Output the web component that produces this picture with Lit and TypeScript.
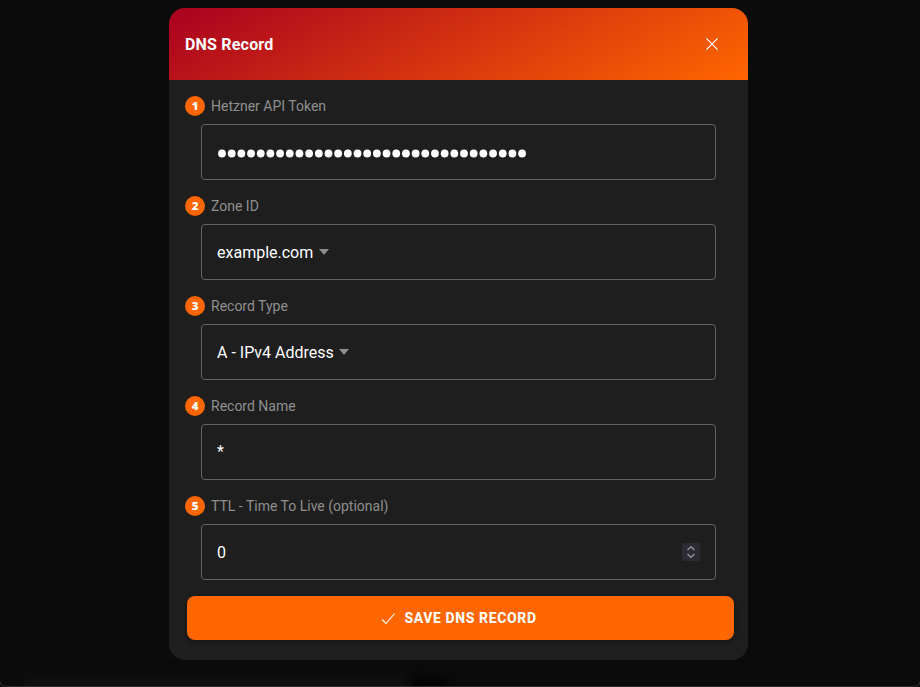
import { LitElement, html, svg, css } from "lit";
import { customElement, property } from "lit/decorators.js";

@customElement("form-field")
class FormField extends LitElement {
  @property({ type: Number }) step = 1;
  @property() label = "";

  static styles = css`
    :host { display: block; }
    .label { display: flex; align-items: center; gap: 6px; height: 20px; margin-left: -16px; font-size: 14px; line-height: 20px; color: #8f8f8f; }
    .badge { width: 20px; height: 20px; border-radius: 50%; background: #ff6600; color: #fff; font: 800 9.6px/20px "Open Sans", sans-serif; text-align: center; }
    .digit { display: block; transform: translateY(0.6px) scaleX(1.2); }
    .box { box-sizing: border-box; height: 56px; margin-top: 8px; padding: 0 15px; border: 1px solid #626262; border-radius: 4px; display: flex; align-items: center; color: #fff; font-size: 16px; line-height: 24px; }
  `;

  render() {
    return html`
      <div class="label"><span class="badge"><span class="digit">${this.step}</span></span><span>${this.label}</span></div>
      <div class="box"><slot></slot></div>
    `;
  }
}

@customElement("app-root")
class AppRoot extends LitElement {
  static styles = css`
    :host { display: block; box-sizing: border-box; height: 687px; overflow: hidden; position: relative; background: #0b0b0b; font-family: Roboto, sans-serif; padding: 8px 172px 0 169px; }
    .backdrop { position: absolute; left: 0; right: 0; bottom: 0; height: 40px; overflow: hidden; }
    .backdrop::before { content: ""; position: absolute; left: 24px; width: 386px; top: 31px; height: 30px; background: #121212; filter: blur(7px); }
    .backdrop::after { content: ""; position: absolute; left: 412px; width: 34px; top: 33px; height: 20px; background: #000; filter: blur(4px); }
    .edge { position: absolute; left: -1px; right: -1px; bottom: 0; height: 12px; border: 1px solid #2c2c2c; border-top: 0; border-radius: 0 0 7px 7px; }
    .card { position: relative; height: 652px; border-radius: 16px; overflow: hidden; background: #1e1e1e; }
    .head { box-sizing: border-box; height: 72px; padding: 0 28px 0 16px; display: flex; align-items: center; justify-content: space-between; background: linear-gradient(150deg, #a90020 0%, #ff6600 100%); color: #fff; }
    .title { padding-top: 2px; font-size: 16px; line-height: 24px; font-weight: 700; letter-spacing: 0.2px; }
    .icon { display: block; fill: none; stroke: #fff; }
    .body { display: flex; flex-direction: column; gap: 16px; padding: 16px 32px 0; }
    .value { padding-top: 2px; }
    .dots { display: block; margin-left: 1px; fill: #fff; }
    .caret { margin-left: 5.5px; border: 5px solid transparent; border-top: 6px solid #8c8c8c; border-bottom: 0; }
    .stepper { margin-left: auto; width: 18px; height: 18px; background: #2b2a33; }
    .stepper .icon { stroke: #8f8f9a; }
    .save { height: 44px; margin: 16px 14px 0 18px; border-radius: 8px; background: #ff6600; box-shadow: 0 2px 4px rgba(0, 0, 0, 0.35); display: flex; align-items: center; justify-content: center; gap: 8px; color: #fff; font-size: 14px; font-weight: 800; letter-spacing: 0.6px; padding-right: 3px; box-sizing: border-box; }
  `;

  render() {
    const caret = html`<span class="caret"></span>`;
    return html`
      <div class="backdrop"></div>
      <div class="edge"></div>
      <div class="card">
        <div class="head">
          <span class="title">DNS Record</span>
          <svg class="icon" width="16" height="16" viewBox="0 0 16 16" stroke-width="1.25"><path d="M2.4 2.4 13.6 13.6M13.6 2.4 2.4 13.6" /></svg>
        </div>
        <div class="body">
          <form-field step="1" label="Hetzner API Token">
            <svg class="dots" width="312" height="12" viewBox="0 0 312 12">
              ${Array.from({ length: 32 }, (_, i) => svg`<circle cx=${4 + i * 9.68} cy="7.5" r="3.9" />`)}
            </svg>
          </form-field>
          <form-field step="2" label="Zone ID"><span class="value">example.com</span>${caret}</form-field>
          <form-field step="3" label="Record Type"><span class="value">A - IPv4 Address</span>${caret}</form-field>
          <form-field step="4" label="Record Name"><span>*</span></form-field>
          <form-field step="5" label="TTL - Time To Live (optional)">
            <span class="value">0</span>
            <span class="stepper"><svg class="icon" width="18" height="18" viewBox="0 0 18 18" stroke-width="1.5"><path d="M5.5 7 9 3.8 12.5 7M5.5 11 9 14.2 12.5 11" /></svg></span>
          </form-field>
        </div>
        <div class="save">
          <svg class="icon" width="15" height="15" viewBox="0 0 15 15" stroke-width="1.1"><path d="M1 8.5 5 12.5 13.7 2.5" /></svg>
          <span>SAVE DNS RECORD</span>
        </div>
      </div>
    `;
  }
}
